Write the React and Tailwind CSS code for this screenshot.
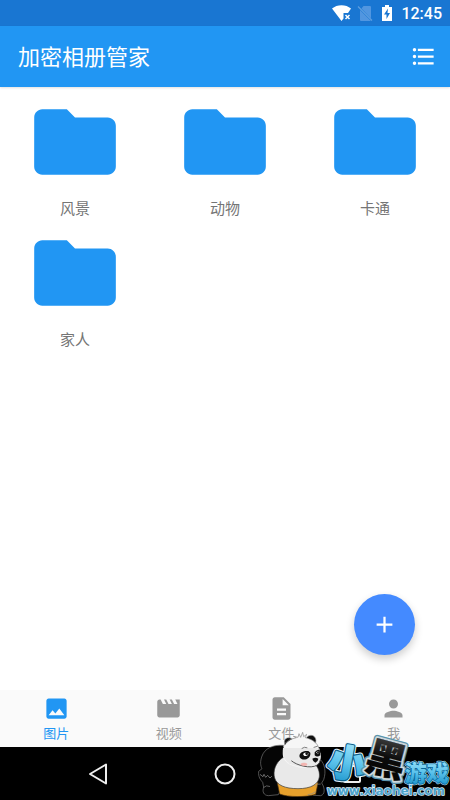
const folders = ['风景', '动物', '卡通', '家人'];

const tabs = [
  {
    label: '图片',
    active: true,
    path: 'M21 19V5c0-1.100-.9-2-2-2H5c-1.100 0-2 .9-2 2v14c0 1.100.9 2 2 2h14c1.100 0 2-.9 2-2zM8.500 13.500l2.500 3.010L14.500 12l4.500 6H5l3.500-4.500z',
  },
  {
    label: '视频',
    path: 'M18 4l2 4h-3l-2-4h-2l2 4h-3l-2-4H8l2 4H7L5 4H4c-1.100 0-1.990.9-1.990 2L2 18c0 1.100.9 2 2 2h16c1.100 0 2-.9 2-2V4h-4z',
  },
  {
    label: '文件',
    path: 'M14 2H6c-1.100 0-1.990.9-1.990 2L4 20c0 1.100.89 2 1.990 2H18c1.100 0 2-.9 2-2V8l-6-6zm2 16H8v-2h8v2zm0-4H8v-2h8v2zm-3-5V3.500L18.500 9H13z',
  },
  {
    label: '我',
    path: 'M12 12c2.210 0 4-1.790 4-4s-1.790-4-4-4-4 1.790-4 4 1.790 4 4 4zm0 2c-2.670 0-8 1.340-8 4v2h16v-2c0-2.660-5.330-4-8-4z',
  },
];

function StatusBar() {
  return (
    <div className="flex h-[26px] shrink-0 items-center justify-end bg-[#1976d2] pr-2 text-white">
      <svg className="mr-1.5 h-[18px] w-5" viewBox="0 0 20 18" aria-hidden="true">
        <path fill="#fff" d="M1 4.500C6 0 15 0 20 4.500L17 9H12.500v5.500L10.500 17z" />
        <path stroke="#fff" strokeWidth="1.500" d="M14.500 11l4 4M18.500 11l-4 4" />
      </svg>
      <svg className="mr-2 h-[18px] w-4" viewBox="0 0 16 18" aria-hidden="true">
        <path fill="#5196e0" d="M6.500 2H13q1 0 1 1v11.500L4.500 4.500zM3 6l11 11H4q-1 0-1-1z" />
        <path stroke="#5e9fe0" strokeWidth="1.300" d="M1 2.500l14 14" />
      </svg>
      <svg className="mr-2 h-[18px] w-3" viewBox="0 0 12 18" aria-hidden="true">
        <path fill="#fff" d="M4 1h4v2h3v14H1V3h3z" />
        <path fill="#1976d2" d="M7 4.500L3 10.500h2.500v4.500L9 9H6.500z" />
      </svg>
      <span className="pt-0.5 font-['Roboto',sans-serif] text-base leading-5 font-medium">12:45</span>
    </div>
  );
}

function Header() {
  return (
    <header className="z-10 flex h-[61px] shrink-0 items-center justify-between bg-[#2196f3] pr-[13px] pl-[18px] text-white shadow-[0_1px_2px_rgba(0,0,0,0.12)]">
      <h1 className="pt-0.5 text-[22px] leading-8 font-normal">加密相册管家</h1>
      <button type="button" aria-label="列表">
        <svg className="size-[27px]" viewBox="0 0 24 24" fill="currentColor" aria-hidden="true">
          <path d="M4 10.500c-.83 0-1.500.67-1.500 1.500s.67 1.500 1.500 1.500 1.500-.67 1.500-1.500-.67-1.500-1.500-1.500zm0-6c-.83 0-1.500.67-1.500 1.500S3.170 7.500 4 7.500 5.500 6.830 5.500 6 4.830 4.500 4 4.500zm0 12c-.83 0-1.500.68-1.500 1.500s.68 1.500 1.500 1.500 1.500-.68 1.500-1.500-.67-1.500-1.500-1.500zM7 19h14v-2H7v2zm0-6h14v-2H7v2zm0-8v2h14V5H7z" />
        </svg>
      </button>
    </header>
  );
}

function Folder({ name }) {
  return (
    <button type="button" className="flex h-[131px] flex-col items-center">
      <svg className="size-[98px]" viewBox="0 0 24 24" fill="#2196f3" aria-hidden="true">
        <path d="M10 4H4c-1.100 0-1.990.9-1.990 2L2 18c0 1.100.9 2 2 2h16c1.100 0 2-.9 2-2V8c0-1.100-.9-2-2-2h-8l-2-2z" />
      </svg>
      <span className="mt-1.5 text-[15px] leading-6 text-[#757575]">{name}</span>
    </button>
  );
}

function TabBar() {
  return (
    <nav className="grid h-[57px] shrink-0 grid-cols-4 bg-[#fafafa]">
      {tabs.map((tab) => (
        <button
          key={tab.label}
          type="button"
          className={`flex flex-col items-center pt-[5px] ${tab.active ? 'text-[#2196f3]' : 'text-[#999999]'}`}
        >
          <svg className="size-[27px]" viewBox="0 0 24 24" fill="currentColor" aria-hidden="true">
            <path d={tab.path} />
          </svg>
          <span className="mt-1 text-[13px] leading-4">{tab.label}</span>
        </button>
      ))}
    </nav>
  );
}

function SystemBar() {
  return (
    <div className="flex h-[53px] shrink-0 items-center justify-center gap-[103px] bg-black text-[#eeeeee]">
      <button type="button" aria-label="返回">
        <svg className="size-6" viewBox="0 0 24 24" fill="none" stroke="currentColor" strokeWidth="2" strokeLinejoin="round" aria-hidden="true">
          <path d="M20 2.500v19L4 12z" />
        </svg>
      </button>
      <button type="button" aria-label="主页">
        <svg className="size-6" viewBox="0 0 24 24" fill="none" stroke="currentColor" strokeWidth="2" aria-hidden="true">
          <circle cx="12" cy="12" r="9.500" />
        </svg>
      </button>
      <button type="button" aria-label="最近">
        <svg className="size-6" viewBox="0 0 24 24" fill="none" stroke="currentColor" strokeWidth="2" aria-hidden="true">
          <rect x="4" y="4" width="16" height="16" rx="1" />
        </svg>
      </button>
    </div>
  );
}

function Watermark() {
  return (
    <svg
      className="pointer-events-none absolute right-0 bottom-0 h-[100px] w-48"
      viewBox="84 60 576 300"
      role="img"
      aria-label="小黑游戏 www.xiaohei.com"
    >
      <defs>
        <linearGradient id="blue" x1="0" y1="0" x2="0" y2="1">
          <stop offset="0.1" stopColor="#a5e6fb" />
          <stop offset="0.55" stopColor="#5cc3ec" />
          <stop offset="1" stopColor="#168fc8" />
        </linearGradient>
        <linearGradient id="gloss" x1="0" y1="0" x2="0" y2="1">
          <stop offset="0.2" stopColor="#3a3a3a" />
          <stop offset="0.5" stopColor="#0c0c0c" />
          <stop offset="1" stopColor="#000" />
        </linearGradient>
      </defs>

      <g strokeLinejoin="round" strokeLinecap="round">
        <path fill="#050505" stroke="#777" strokeWidth="2" d="M160 196C128 193 104 206 96 228C90 244 91 257 96 266L86 274C84 291 92 300 98 307L101 322C96 335 101 346 115 347L145 344L154 325L134 286L160 236z" />
        <path fill="#050505" stroke="#777" strokeWidth="2" d="M258 240L272 240C284 252 289 275 281 299L275 309C286 325 285 344 272 347L250 346L244 310z" />
        <path fill="#e8a12c" stroke="#54370f" strokeWidth="2" d="M142 309L149 342C172 352 231 352 257 343L264 308z" />
        <path fill="#e9e9e9" stroke="#333" strokeWidth="2" d="M158 233C137 247 128 272 134 294C140 315 164 326 204 326C243 326 265 313 268 291C270 274 263 258 250 247z" />
        <path fill="none" stroke="#999" strokeWidth="2" d="M91 284l8 6 3-7 5 9 6-6 7 8 5-5" />
        <path fill="none" stroke="#888" strokeWidth="2" d="M101 322q8-8 18-3M271 312q-10-2-15 6M234 344q12-1 22-8" />
        <path fill="#111" stroke="#aaa" strokeWidth="2" d="M166 199C155 176 174 166 189 178L187 191z" />
        <path fill="#111" stroke="#aaa" strokeWidth="2" d="M230 172C240 160 257 166 258 181C258 191 253 196 247 195z" />
        <path fill="#f6f6f6" d="M159 229C154 200 172 178 199 173L190 169L204 172L207 161L212 172L218 157L221 170L230 163L226 173C249 178 267 192 269 213C276 229 272 247 260 256C240 266 205 266 181 254C168 248 160 240 159 229z" />
        <path fill="#e9e9e9" d="M159 204H267L270 216Q274 246 259 254C236 263 205 263 181 252C168 246 156 230 159 204z" />
        <path fill="none" stroke="#888" strokeWidth="2" d="M165 190Q178 176 199 173L190 169L204 172L207 161L212 172L218 157L221 170L230 163L226 173C249 178 267 192 269 213" />
        <path fill="none" stroke="#555" strokeWidth="3" d="M185 243C200 256 242 268 262 255Q269 250 271 240" />
        <path fill="none" stroke="#444" strokeWidth="2" d="M216 205q7-6 15-2M252 202l10-3" />
        <path fill="#101010" d="M209 232C205 219 219 211 235 213L241 218C244 235 219 247 209 232zM254 217Q262 206 269 210L271 226Q261 233 254 226z" />
        <path fill="#fff" d="M219 222q9-8 17-1q-4 9-14 6zM258 217q6-5 10 0l-4 6z" />
        <circle cx="230" cy="221" r="4" fill="#111" />
        <circle cx="264" cy="218" r="3" fill="#111" />
        <ellipse cx="222" cy="253" rx="10" ry="5" fill="#f3aaa6" opacity="0.85" />
        <path fill="#111" d="M247 236q10-5 18 0q-1 9-9 12q-7-2-9-12z" />
      </g>

      <g fontFamily="'Noto Sans CJK SC', sans-serif" fontWeight="900" paintOrder="stroke" strokeLinejoin="round">
        <text x="296" y="290" fontSize="112" fill="none" stroke="#e9f8ff" strokeWidth="18" transform="rotate(10 350 250)">小</text>
        <text x="296" y="290" fontSize="112" fill="url(#blue)" stroke="#105f88" strokeWidth="12" transform="rotate(10 350 250)">小</text>
        <text x="296" y="290" fontSize="112" fill="url(#blue)" stroke="url(#blue)" strokeWidth="5" transform="rotate(10 350 250)">小</text>
        <text x="408" y="282" fontSize="120" fill="none" stroke="#5b93ab" strokeWidth="20" transform="rotate(15 466 242)">黑</text>
        <text x="408" y="282" fontSize="120" fill="none" stroke="#cdd8dc" strokeWidth="12" transform="rotate(15 466 242)">黑</text>
        <text x="408" y="282" fontSize="120" fill="url(#gloss)" stroke="#111" strokeWidth="1" transform="rotate(15 466 242)">黑</text>
        <text x="524" y="302" fontSize="66" fill="none" stroke="#c4e8f6" strokeWidth="8">游戏</text>
        <text x="524" y="302" fontSize="66" fill="url(#blue)" stroke="#09679a" strokeWidth="5">游戏</text>
      </g>
      <text
        x="290"
        y="345"
        fontFamily="'DejaVu Sans', sans-serif"
        fontWeight="700"
        fontSize="36"
        fill="#4ea3cb"
        stroke="#e0f5ff"
        strokeWidth="4"
        strokeLinejoin="round"
        paintOrder="stroke"
      >
        www.xiaohei.com
      </text>
    </svg>
  );
}

export default function App() {
  return (
    <div className="relative flex min-h-screen flex-col bg-white font-['Roboto','Noto_Sans_CJK_SC',sans-serif]">
      <StatusBar />
      <Header />
      <main className="relative flex-1 pt-[6px]">
        <div className="grid grid-cols-3">
          {folders.map((name) => (
            <Folder key={name} name={name} />
          ))}
        </div>
        <button
          type="button"
          aria-label="添加"
          className="absolute right-[35px] bottom-[35px] flex size-[61px] items-center justify-center rounded-full bg-[#448aff] text-white shadow-[0_4px_8px_rgba(0,0,0,0.2)]"
        >
          <svg className="size-[27px]" viewBox="0 0 24 24" fill="currentColor" aria-hidden="true">
            <path d="M19 13h-6v6h-2v-6H5v-2h6V5h2v6h6v2z" />
          </svg>
        </button>
      </main>
      <TabBar />
      <SystemBar />
      <Watermark />
    </div>
  );
}
